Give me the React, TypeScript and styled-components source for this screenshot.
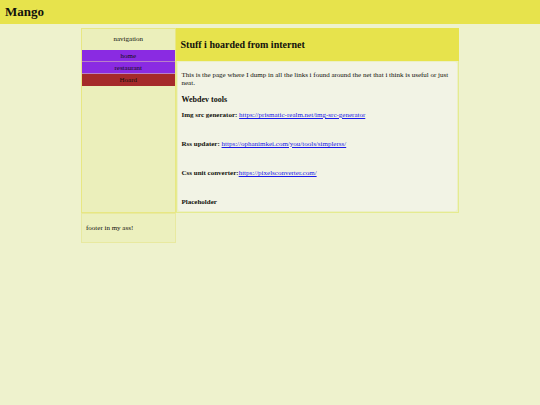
import React from "react";
import styled, { createGlobalStyle } from "styled-components";

const GlobalStyle = createGlobalStyle`
  * { box-sizing: border-box; }
  html { background: #eef2cd; }
  body {
    margin: 0;
    background: #eef2cd;
    color: #11110c;
    font: 7px/8px "Liberation Serif", "Times New Roman", serif;
  }
`;

const Banner = styled.header`
  display: flex;
  align-items: center;
  height: 24px;
  padding: 0 5px;
  background: #e7e34c;
`;

const SiteName = styled.h1`
  margin: 0;
  font-size: 13px;
  line-height: 16px;
`;

const Layout = styled.div`
  display: grid;
  grid-template-columns: 1fr 3fr;
  width: 70%;
  margin: 4px auto 0;
`;

const Sidebar = styled.nav`
  border: 1px solid #e8e783;
  background: #ebefbb;
  text-align: center;
`;

const NavTitle = styled.p`
  margin: 6px 0 7px;
`;

const NavList = styled.ul`
  margin: 0;
  padding: 0;
  list-style: none;
`;

const NavLink = styled.a<{ $current?: boolean }>`
  display: block;
  padding: 2px 0 1px;
  border-bottom: 1px solid ${({ $current }) => ($current ? "#a52a2a" : "#b87fc8")};
  background: ${({ $current }) => ($current ? "#a52a2a" : "#8a2be2")};
  color: #11110c;
  text-decoration: none;
`;

const Main = styled.main`
  border: 1px solid #e5eb90;
  background: #ecf0c6;
`;

const PageTitle = styled.h2`
  margin: -1px -1px 0;
  padding: 11px 5px 10px;
  background: #e7e34c;
  font-size: 10px;
  line-height: 12px;
`;

const Content = styled.section`
  margin: 1px;
  padding: 9px 4px 5px;
  border-radius: 2px;
  background: #f2f3e5;
`;

const Intro = styled.p`
  margin: 0;
`;

const SectionTitle = styled.h3`
  margin: 8px 0 7px;
  font-size: 8px;
  line-height: 9px;
`;

const Links = styled.div`
  display: grid;
  gap: 21px;
`;

const Entry = styled.p`
  margin: 0;
`;

const Link = styled.a`
  color: #1818e8;
  text-decoration: underline;
`;

const Footer = styled.footer`
  padding: 10px 4px;
  border: 1px solid #e8e9a0;
  background: #ecf0be;
`;

const pages = [
  { name: "home" },
  { name: "restaurant" },
  { name: "Hoard", current: true },
];

const tools = [
  { label: "Img src generator: ", url: "https://prismatic-realm.net/img-src-generator" },
  { label: "Rss updater: ", url: "https://ophanimkei.com/you/tools/simplerss/" },
  { label: "Css unit converter:", url: "https://pixelsconverter.com/" },
  { label: "Placeholder" },
];

export default function App() {
  return (
    <>
      <GlobalStyle />
      <Banner>
        <SiteName>Mango</SiteName>
      </Banner>
      <Layout>
        <Sidebar>
          <NavTitle>navigation</NavTitle>
          <NavList>
            {pages.map(({ name, current }) => (
              <li key={name}>
                <NavLink href={`#${name}`} $current={current} aria-current={current ? "page" : undefined}>
                  {name}
                </NavLink>
              </li>
            ))}
          </NavList>
        </Sidebar>
        <Main>
          <PageTitle>Stuff i hoarded from internet</PageTitle>
          <Content>
            <Intro>
              This is the page where I dump in all the links i found around the net that i think is useful or just neat.
            </Intro>
            <SectionTitle>Webdev tools</SectionTitle>
            <Links>
              {tools.map(({ label, url }) => (
                <Entry key={label}>
                  <b>{label}</b>
                  {url && <Link href={url}>{url}</Link>}
                </Entry>
              ))}
            </Links>
          </Content>
        </Main>
        <Footer>footer in my ass!</Footer>
      </Layout>
    </>
  );
}
